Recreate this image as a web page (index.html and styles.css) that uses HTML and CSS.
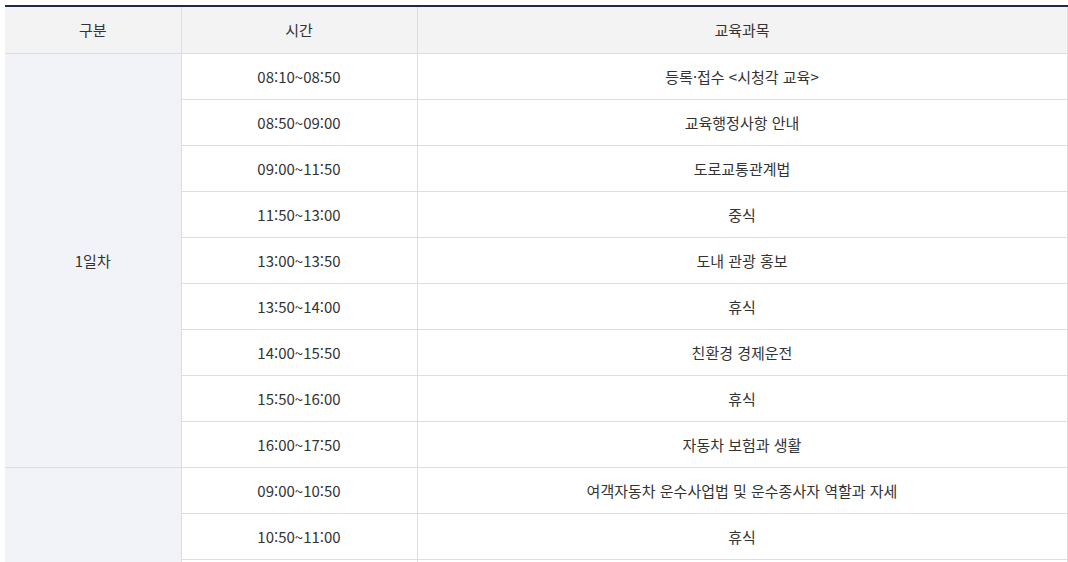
FILE: index.html
```html
<!DOCTYPE html>
<html lang="ko">
<head>
<meta charset="utf-8">
<link rel="stylesheet" href="styles.css">
</head>
<body>
<table class="schedule">
  <colgroup>
    <col class="c-day">
    <col class="c-time">
    <col class="c-subject">
  </colgroup>
  <thead>
    <tr><th>구분</th><th>시간</th><th>교육과목</th></tr>
  </thead>
  <tbody>
    <tr><td class="day" rowspan="9">1일차</td><td>08:10~08:50</td><td>등록·접수 &lt;시청각 교육&gt;</td></tr>
    <tr><td>08:50~09:00</td><td>교육행정사항 안내</td></tr>
    <tr><td>09:00~11:50</td><td>도로교통관계법</td></tr>
    <tr><td>11:50~13:00</td><td>중식</td></tr>
    <tr><td>13:00~13:50</td><td>도내 관광 홍보</td></tr>
    <tr><td>13:50~14:00</td><td>휴식</td></tr>
    <tr><td>14:00~15:50</td><td>친환경 경제운전</td></tr>
    <tr><td>15:50~16:00</td><td>휴식</td></tr>
    <tr><td>16:00~17:50</td><td>자동차 보험과 생활</td></tr>
    <tr><td class="day" rowspan="8">2일차</td><td>09:00~10:50</td><td>여객자동차 운수사업법 및 운수종사자 역할과 자세</td></tr>
    <tr><td>10:50~11:00</td><td>휴식</td></tr>
    <tr><td>11:00~11:50</td><td>응급처치 요령</td></tr>
    <tr><td>11:50~13:00</td><td>중식</td></tr>
    <tr><td>13:00~13:50</td><td>교통사고 예방</td></tr>
    <tr><td>13:50~14:00</td><td>휴식</td></tr>
    <tr><td>14:00~15:50</td><td>서비스 교육</td></tr>
    <tr><td>15:50~16:00</td><td>수료</td></tr>
  </tbody>
</table>
</body>
</html>
```
FILE: styles.css
```css
html, body {
  margin: 0;
  padding: 0;
  background: #fff;
}
body {
  padding: 5px 0 0 5px;
  font-family: "Noto Sans CJK KR", "Noto Sans", sans-serif;
  font-size: 15px;
  color: #333;
}
.schedule {
  width: 1062px;
  border-collapse: collapse;
  table-layout: fixed;
  border-top: 2px solid #1f2a4b;
}
.c-day { width: 176px; }
.c-time { width: 236px; }
.c-subject { width: 650px; }
.schedule th,
.schedule td {
  height: 45px;
  padding: 0;
  text-align: center;
  vertical-align: middle;
  border-bottom: 1px solid #dddddd;
  border-right: 1px solid #dddddd;
  font-weight: 400;
  line-height: 20px;
}
.schedule th {
  height: 46px;
  background: #f3f3f3;
}
.schedule td.day {
  background: #f1f3f8;
}
```
